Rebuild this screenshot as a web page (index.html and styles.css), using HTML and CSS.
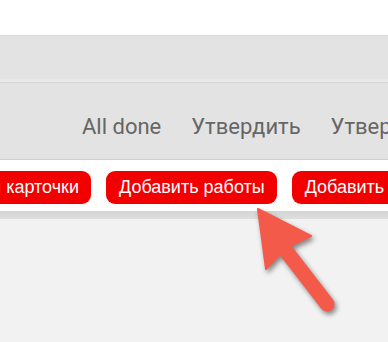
FILE: index.html
```html
<!DOCTYPE html>
<html lang="ru">
<head>
  <meta charset="UTF-8"/>
  <title>Работы</title>
  <link rel="stylesheet" href="styles.css">
</head>
<body>
  <div class="top"></div>

  <div class="bar"></div>

  <nav class="tabs">
    <span>All done</span>
    <span>Утвердить</span>
    <span>Утвердить все</span>
  </nav>

  <div class="toolbar">
    <div class="row">
      <div class="clip"><button>Скачать шаблоны и карточки</button></div>
      <button>Добавить работы</button>
      <button>Добавить материалы</button>
    </div>
  </div>

  <div class="shade"></div>

  <main class="content"></main>

  <svg class="arrow" width="388" height="342" viewBox="0 0 388 342" aria-hidden="true">
    <g class="arrow-shape">
      <polygon points="258,209 311,236 292,245 279,255 266,269"/>
      <line x1="283" y1="247" x2="327" y2="304"/>
    </g>
  </svg>
</body>
</html>
```

FILE: styles.css
```css
* { box-sizing:border-box; margin:0; padding:0; }
body {
  width:388px; height:342px; overflow:hidden; position:relative;
  background:#f2f2f2;
  font-family:"Liberation Sans", Arial, sans-serif;
}

/* —— top strips —— */
.top { height:35px; background:#fff; }
.bar {
  height:48px; background:#e3e3e3;
  border-top:1px solid #d9d9d9;
  border-bottom:1px solid #d6d6d6;
  box-shadow:inset 0 -3px 0 #e8e8e8;
}

/* —— tabs —— */
.tabs {
  height:77px; background:#e3e3e3;
  display:flex; align-items:center; gap:30px;
  padding:10px 0 0 82px;
  border-bottom:1px solid #cfcfcf;
  white-space:nowrap; overflow:hidden;
  font-family:Roboto, "Liberation Sans", sans-serif;
  font-size:22px; color:#666;
}

/* —— toolbar with buttons —— */
.toolbar {
  height:51px; background:#fff;
  overflow:hidden;
  padding-top:11px;
}
.toolbar .row { display:flex; gap:15px; }
.toolbar .clip {
  width:91px; flex-shrink:0;
  display:flex; justify-content:flex-end; overflow:hidden;
}
.toolbar button {
  flex-shrink:0;
  height:33px; padding:0 12px 0 13px;
  background:#f20000; color:#fff;
  border:none; border-radius:9px;
  font-family:"Liberation Sans", Arial, sans-serif;
  font-size:18px; white-space:nowrap;
}

.shade {
  height:8px;
  background:linear-gradient(#d4d4d4, #dedede);
}
.content { height:120px; background:#f2f2f2; }

/* —— callout arrow —— */
.arrow { position:absolute; left:0; top:0; }
.arrow-shape {
  fill:#f45a4a; stroke:#f45a4a;
  filter:drop-shadow(2px 3px 2.5px rgba(0,0,0,0.45));
}
.arrow-shape polygon { stroke-width:2; stroke-linejoin:round; }
.arrow-shape line { stroke-width:15; stroke-linecap:round; }
```
